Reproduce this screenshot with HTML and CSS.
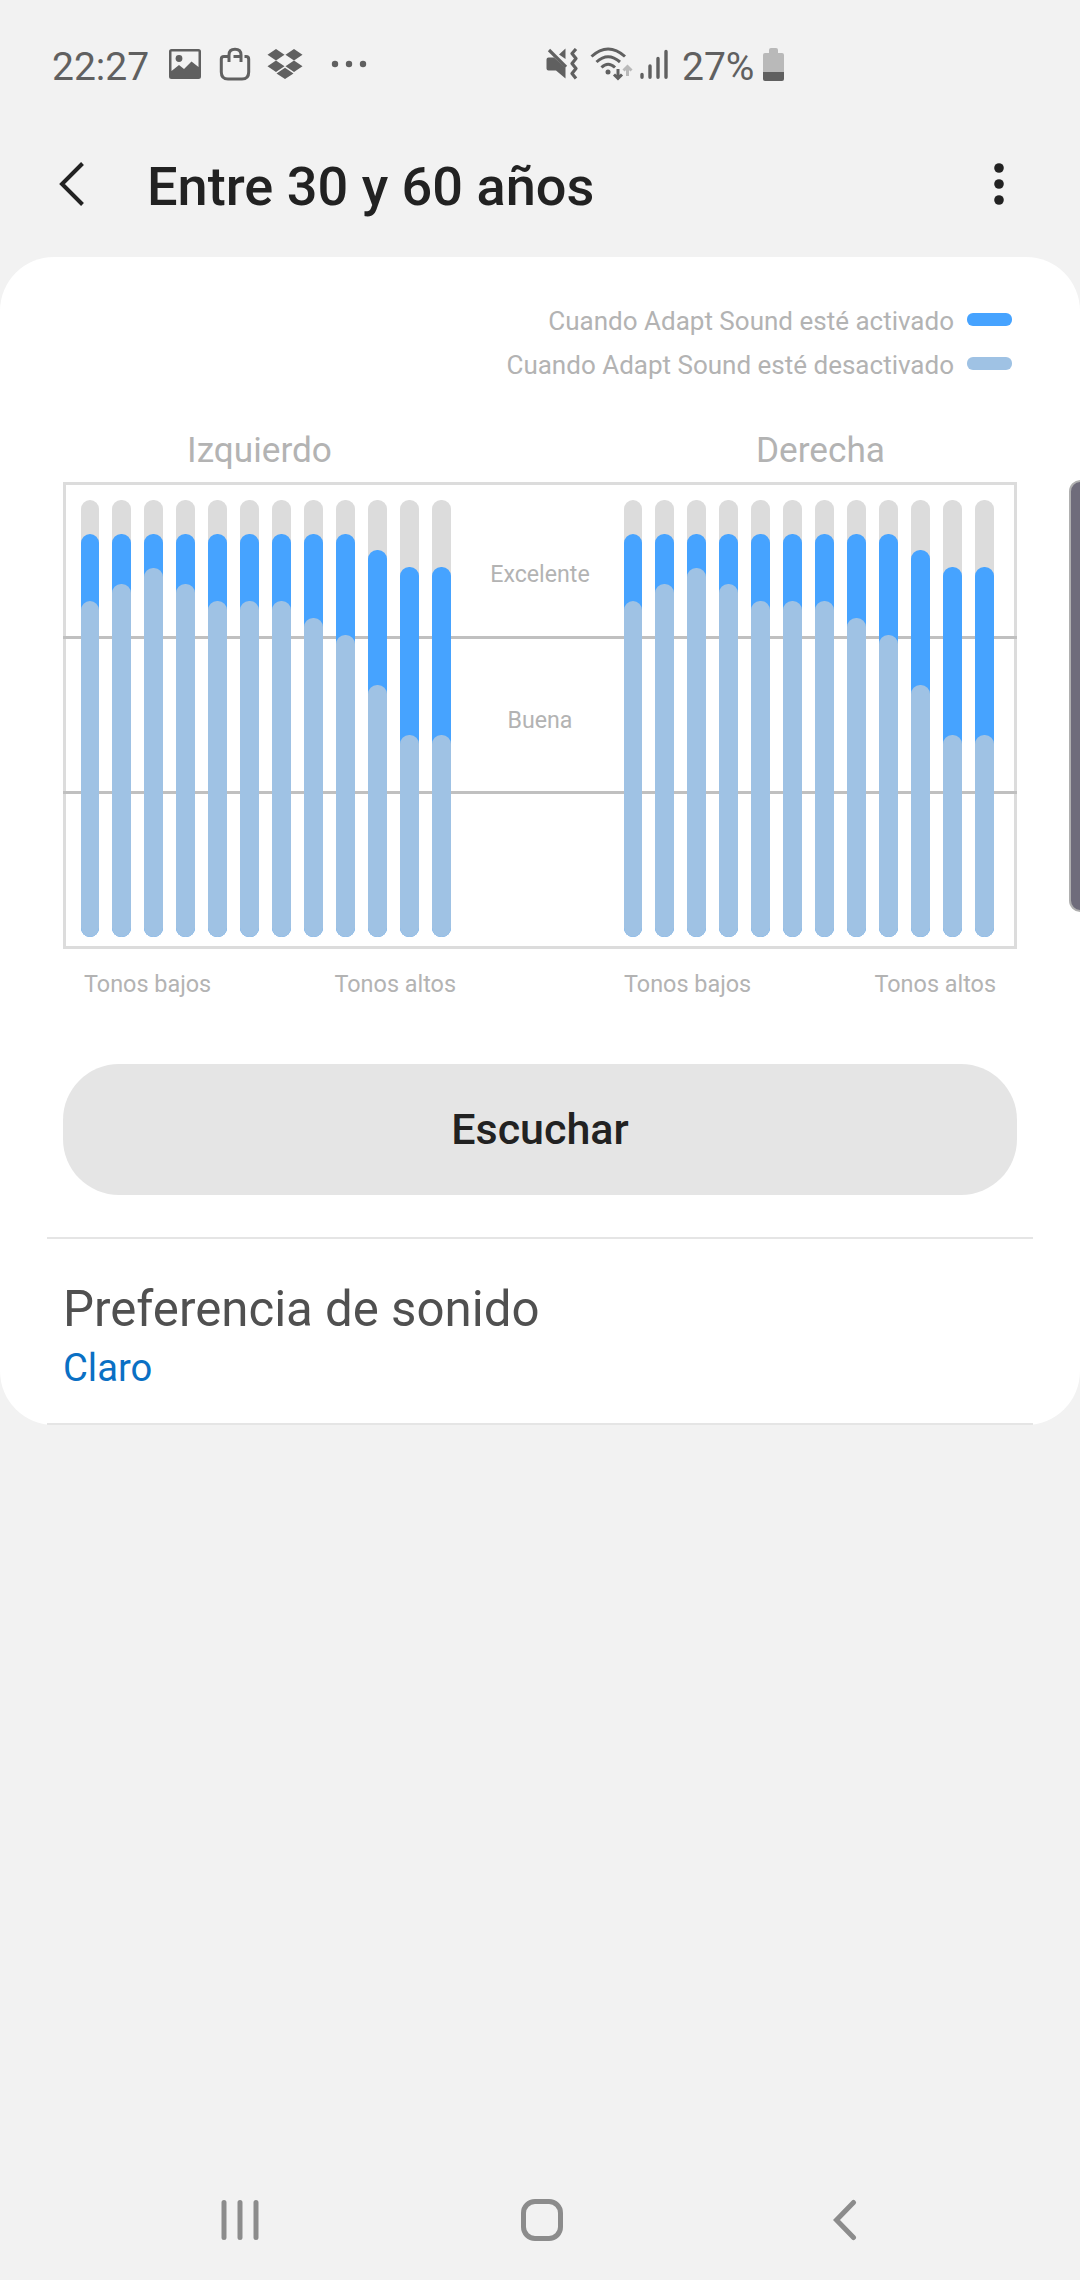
FILE: index.html
```html
<!DOCTYPE html>
<html lang="es">
<head>
    <meta charset="UTF-8">
    <title>Adapt Sound</title>
    <link rel="stylesheet" href="styles.css">
</head>
<body>
<div class="status">
    <span class="time">22:27</span>
    <svg class="ic_image" width="32" height="30" viewBox="0 0 32 30">
        <path fill="#606060" fill-rule="evenodd" d="M2.500 0H29.500Q32 0 32 2.500V27.500Q32 30 29.500 30H2.500Q0 30 0 27.500V2.500Q0 0 2.500 0ZM2.500 2.500V22L10 16L15 20L22.500 12.500L29.500 18V2.500Z"/>
        <circle cx="10" cy="9.500" r="3.400" fill="#606060"/>
    </svg>
    <svg class="ic_bag" width="32" height="34" viewBox="0 0 32 34" fill="none" stroke="#606060" stroke-width="3">
        <path d="M9.500 9.500H5Q2.300 9.500 2.300 12V25Q2.300 32 9 32H23Q29.700 32 29.700 25V12Q29.700 9.500 27 9.500H25.500"/>
        <path d="M10 15V8Q10 2.300 16 2.300Q22 2.300 22 8V15M14.500 9.500H22"/>
    </svg>
    <svg class="ic_drop" width="36" height="30" viewBox="0 0 36 30" fill="#606060">
        <path d="M9 0L17.500 5.800L9 11.500L.500 5.800ZM27 0L35.500 5.800L27 11.500L18.500 5.800ZM9 11.500L17.500 17.300L9 23L.500 17.300ZM27 11.500L35.500 17.300L27 23L18.500 17.300ZM18 18.800L26.500 24.400L18 30L9.500 24.400Z"/>
    </svg>
    <svg class="ic_dots" width="36" height="8" viewBox="0 0 36 8" fill="#606060">
        <circle cx="4" cy="4" r="3.200"/><circle cx="18" cy="4" r="3.200"/><circle cx="32" cy="4" r="3.200"/>
    </svg>
    <svg class="ic_mute" width="32" height="32" viewBox="0 0 32 32" fill="#606060">
        <path d="M2.500 9.500H8L19.500 20V30.500L10 22.500H2.500Q.500 22.500 .500 20.500V11.500Q.500 9.500 2.500 9.500ZM13 6.500L19.500 .500V11Z"/>
        <path d="M3 2L20 19" stroke="#606060" stroke-width="3.200"/>
        <path d="M30 1L26 5.500L30 10.500L26 15.500L30 20.500L26 25.500L30 30.500" fill="none" stroke="#606060" stroke-width="3.200" stroke-linejoin="round"/>
    </svg>
    <svg class="ic_wifi" width="44" height="34" viewBox="0 0 44 34" fill="none" stroke="#606060" stroke-width="3">
        <path d="M1.500 9.500Q18 -5.500 35 9.500M6.500 15Q18 4.500 30 15M11.500 20.500Q18 14 25 20.500"/>
        <circle cx="18" cy="25" r="2.500" fill="#606060" stroke="none"/>
        <path d="M28 22V31M24 27.500L28 31.500L32 27.500"/>
        <path stroke="#b9b9b9" d="M37.500 29V20M33.500 23.500L37.500 19.500L41.500 23.500"/>
    </svg>
    <svg class="ic_signal" width="28" height="32" viewBox="0 0 28 32" stroke="#606060" stroke-width="3.400" stroke-linecap="round">
        <path d="M2 26.500V29.300M10 18V29.300M18 10.500V29.300M26 3.500V29.300"/>
    </svg>
    <span class="percent">27%</span>
    <svg class="ic_battery" width="21" height="33" viewBox="0 0 21 33">
        <path fill="#b9b9b9" d="M6 2Q6 0 8 0H13Q15 0 15 2V5H19Q21 5 21 7V24H0V7Q0 5 2 5H6Z"/>
        <path fill="#606060" d="M0 24H21V31Q21 33 19 33H2Q0 33 0 31Z"/>
    </svg>
</div>

<div class="header">
    <svg class="back" width="26" height="44" viewBox="0 0 26 44">
        <path d="M23.500 1.500L3 22L23.500 42.500" fill="none" stroke="#222" stroke-width="4"/>
    </svg>
    <h1>Entre 30 y 60 años</h1>
    <svg class="more" width="10" height="42" viewBox="0 0 10 42" fill="#222">
        <circle cx="5" cy="5" r="4.800"/><circle cx="5" cy="21" r="4.800"/><circle cx="5" cy="37" r="4.800"/>
    </svg>
</div>

<div class="card">
    <ul class="legend">
        <li><span>Cuando Adapt Sound esté activado</span><i class="swatch on"></i></li>
        <li><span>Cuando Adapt Sound esté desactivado</span><i class="swatch off"></i></li>
    </ul>
    <div class="ears">
        <span>Izquierdo</span>
        <span>Derecha</span>
    </div>
    <div class="chart">
        <i class="line line1"></i>
        <i class="line line2"></i>
        <div class="bars"></div>
        <div class="levels">
            <span>Excelente</span>
            <span>Buena</span>
        </div>
        <div class="bars"></div>
    </div>
    <div class="tones">
        <div><span>Tonos bajos</span><span>Tonos altos</span></div>
        <div><span>Tonos bajos</span><span>Tonos altos</span></div>
    </div>
    <button class="listen">Escuchar</button>
    <div class="pref">
        <p class="pref_title">Preferencia de sonido</p>
        <p class="pref_value">Claro</p>
    </div>
</div>

<div class="nav">
    <svg width="40" height="42" viewBox="0 0 40 42" stroke="#8c8c8c" stroke-width="5" stroke-linecap="round">
        <path d="M4 3.500V38.500M20 3.500V38.500M36 3.500V38.500"/>
    </svg>
    <svg class="home" width="42" height="42" viewBox="0 0 42 42">
        <rect x="2.500" y="2.500" width="37" height="37" rx="11.500" fill="none" stroke="#8c8c8c" stroke-width="5"/>
    </svg>
    <svg width="24" height="42" viewBox="0 0 24 42">
        <path d="M20.500 3.500L3.500 21L20.500 38.500" fill="none" stroke="#8c8c8c" stroke-width="5" stroke-linecap="round"/>
    </svg>
</div>
<div class="edge"></div>

<script>
    var on = [403, 403, 403, 403, 403, 403, 403, 403, 403, 387, 370, 370];
    var off = [336, 353, 369, 353, 336, 336, 336, 319, 302, 252, 202, 202];
    var boxes = document.getElementsByClassName('bars');

    for (var i = 0; i < boxes.length; i++) {
        var html = '';
        for (var j = 0; j < on.length; j++) {
            html += '<div class="bar">' +
                '<i class="on" style="height:' + on[j] + 'px"></i>' +
                '<i class="off" style="height:' + off[j] + 'px"></i>' +
                '</div>';
        }
        boxes[i].innerHTML = html;
    }
</script>
</body>
</html>
```

FILE: styles.css
```css
*{
    padding: 0;
    margin: 0;
    list-style: none;
    box-sizing: border-box;
}
body{
    width: 1080px;
    height: 2280px;
    display: flex;
    flex-direction: column;
    background-color: #f2f2f2;
    font-family: Roboto, sans-serif;
    position: relative;
    overflow: hidden;
}
svg{
    display: block;
    flex: none;
}
.status{
    height: 128px;
    padding-left: 52px;
    display: flex;
    align-items: center;
    color: #606060;
    font-size: 39px;
}
.status span{
    padding-top: 5px;
    white-space: nowrap;
}
.time{
    width: 117px;
}
.ic_bag{
    margin-left: 18px;
}
.ic_drop{
    margin-left: 16px;
}
.ic_dots{
    margin-left: 28px;
}
.ic_mute{
    margin-left: 179px;
}
.ic_wifi{
    margin-left: 12px;
}
.ic_signal{
    margin-left: 6px;
}
.percent{
    width: 81px;
    margin-left: 14px;
}
.header{
    height: 129px;
    padding: 0 77px 18px 59px;
    display: flex;
    align-items: center;
}
.header h1{
    flex: 1;
    margin-left: 62px;
    padding-top: 6px;
    font-size: 54.1px;
    font-weight: 500;
    color: #222;
}
.more{
    margin-right: -1px;
}
.card{
    height: 1168px;
    padding-top: 41px;
    border-radius: 54px;
    background-color: #fff;
}
.legend{
    padding-right: 68px;
}
.legend li{
    height: 44px;
    display: flex;
    justify-content: flex-end;
    align-items: center;
    gap: 13px;
    font-size: 26px;
    color: #b3b3b3;
}
.legend span{
    padding-top: 2px;
}
.swatch{
    width: 45px;
    height: 13px;
    margin-bottom: 1px;
    border-radius: 6px;
}
.on{
    background-color: #46a3ff;
}
.off{
    background-color: #9fc2e4;
}
.ears{
    height: 96px;
    padding: 31px 63px 0;
    display: flex;
    justify-content: space-between;
    line-height: 66px;
    font-size: 35.2px;
    color: #b3b3b3;
}
.ears span{
    width: 393px;
    text-align: center;
}
.chart{
    position: relative;
    height: 467px;
    margin: 0 63px;
    padding: 15px 20px 9px 15px;
    display: flex;
    border: 3px solid #dcdcdc;
}
.line{
    position: absolute;
    left: -3px;
    right: -3px;
    height: 3px;
    background-color: #c0c0c0;
}
.line1{
    top: 151px;
}
.line2{
    top: 306px;
}
.bars{
    position: relative;
    display: flex;
    gap: 13px;
}
.bar{
    width: 19px;
    display: grid;
    align-items: end;
    border-radius: 9px;
    background-color: #dcdcdc;
}
.bar:first-child{
    width: 18px;
}
.bar i{
    grid-area: 1 / 1;
    border-radius: 9px;
}
.levels{
    width: 173px;
    padding: 60px 0 0 5px;
    text-align: center;
    font-size: 23.2px;
    line-height: 28px;
    color: #b3b3b3;
}
.levels span{
    display: block;
    margin-bottom: 118px;
}
.tones{
    height: 115px;
    padding: 1px 84px 0;
    display: flex;
    justify-content: space-between;
    line-height: 68px;
    font-size: 23.4px;
    color: #b3b3b3;
}
.tones div{
    width: 372px;
    display: flex;
    justify-content: space-between;
}
.listen{
    display: block;
    width: 954px;
    height: 131px;
    margin: 0 63px 42px;
    padding-bottom: 2px;
    border: none;
    border-radius: 56px;
    background-color: #e5e5e5;
    font-family: inherit;
    font-size: 43px;
    font-weight: 500;
    color: #222;
}
.pref{
    height: 188px;
    margin: 0 47px;
    padding: 41px 16px 0;
    border-top: 2px solid #e5e5e5;
    border-bottom: 2px solid #e5e5e5;
}
.pref_title{
    line-height: 58px;
    font-size: 49.2px;
    color: #505050;
}
.pref_value{
    line-height: 60px;
    font-size: 38.2px;
    color: #0a70c4;
}
.nav{
    margin-top: auto;
    height: 120px;
    padding: 0 223px 0 220px;
    display: flex;
    justify-content: space-between;
    align-items: center;
}
.home{
    margin-right: 10px;
}
/* edge panel handle */
.edge{
    position: absolute;
    top: 480px;
    right: -12px;
    width: 23px;
    height: 432px;
    border: 2px solid #b0b0b0;
    border-radius: 13px;
    background-color: #6f6c7b;
}
```
